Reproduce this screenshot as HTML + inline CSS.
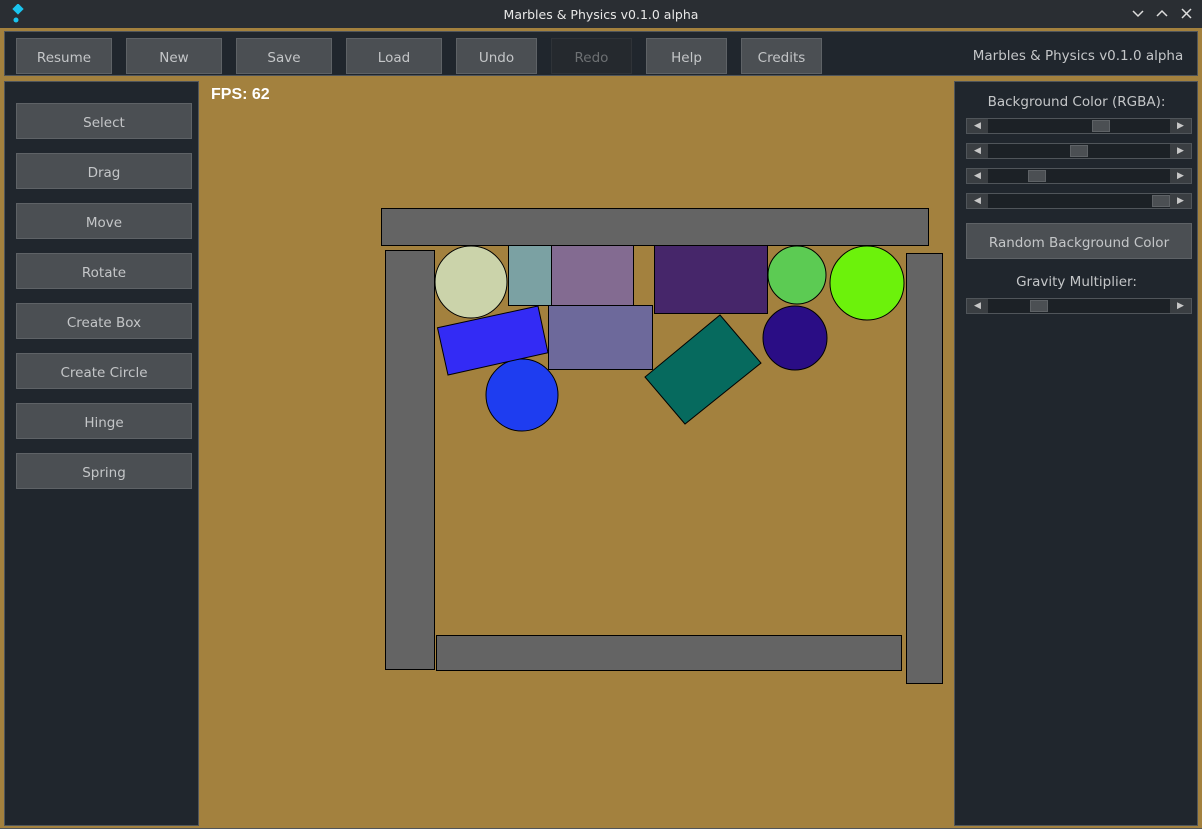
<!DOCTYPE html>
<html><head><meta charset="utf-8"><style>
*{margin:0;padding:0;box-sizing:border-box}
body{width:1202px;height:829px;background:#a3813e;font-family:"DejaVu Sans","Liberation Sans",sans-serif;position:relative;overflow:hidden;color:#c4c6c8}
.abs{position:absolute}
.title{left:0;top:0;width:1202px;height:29px;background:#2a2e33;border-bottom:1px solid #a3813e}
.title .t{position:absolute;left:0;right:0;top:7px;text-align:center;font-size:12.5px;color:#e8e8e8}
.panel{background:#20262d;border:1px solid #50555a}
.btn{position:absolute;background:#4b4f53;border:1px solid #5e6266;font-size:13.5px;color:#c4c6c8;text-align:center;display:flex;align-items:center;justify-content:center;padding-top:3px}
.dis{background:#25292e;border-color:#2f3338;color:#6d7073}
.sl{position:absolute;left:966px;width:226px;height:16px;background:#1c2126;border:1px solid #50555a}
.sl .a{position:absolute;top:0;width:21px;height:14px;background:#3a3e42;color:#c8c8c8;font-size:9px;line-height:14px;text-align:center}
.sl .th{position:absolute;top:1px;width:18px;height:12px;background:#4b4f53;border:1px solid #5e6266}
.lbl{position:absolute;left:955px;width:243px;text-align:center;font-size:13.5px;color:#c4c6c8}
</style></head><body>
<div class="abs title"><div class="t">Marbles &amp; Physics v0.1.0 alpha</div>
<svg class="abs" style="left:8px;top:4px" width="18" height="20" viewBox="0 0 18 20"><rect x="6" y="1" width="8" height="8" transform="rotate(45 10 5)" fill="#1ac4ee"/><circle cx="8" cy="16" r="2.5" fill="#1ac4ee"/></svg>
<svg class="abs" style="left:1130px;top:7px" width="65" height="14" viewBox="0 0 65 14" stroke="#ddd" stroke-width="1.5" fill="none"><path d="M3 4l5 5 5-5"/><path d="M27 9l5-5 5 5"/><path d="M52 2l9 9M61 2l-9 9"/></svg>
</div>
<div class="abs panel" style="left:4px;top:31px;width:1194px;height:45px"></div>
<div class="btn" style="left:16px;top:38px;width:96px;height:36px">Resume</div>
<div class="btn" style="left:126px;top:38px;width:96px;height:36px">New</div>
<div class="btn" style="left:236px;top:38px;width:96px;height:36px">Save</div>
<div class="btn" style="left:346px;top:38px;width:96px;height:36px">Load</div>
<div class="btn" style="left:456px;top:38px;width:81px;height:36px">Undo</div>
<div class="btn dis" style="left:551px;top:38px;width:81px;height:36px">Redo</div>
<div class="btn" style="left:646px;top:38px;width:81px;height:36px">Help</div>
<div class="btn" style="left:741px;top:38px;width:81px;height:36px">Credits</div>
<div class="abs" style="left:940px;width:276px;top:48px;text-align:center;font-size:13.5px">Marbles &amp; Physics v0.1.0 alpha</div>

<div class="abs panel" style="left:4px;top:81px;width:195px;height:745px"></div>
<div class="btn" style="left:16px;top:103px;width:176px;height:36px">Select</div>
<div class="btn" style="left:16px;top:153px;width:176px;height:36px">Drag</div>
<div class="btn" style="left:16px;top:203px;width:176px;height:36px">Move</div>
<div class="btn" style="left:16px;top:253px;width:176px;height:36px">Rotate</div>
<div class="btn" style="left:16px;top:303px;width:176px;height:36px">Create Box</div>
<div class="btn" style="left:16px;top:353px;width:176px;height:36px">Create Circle</div>
<div class="btn" style="left:16px;top:403px;width:176px;height:36px">Hinge</div>
<div class="btn" style="left:16px;top:453px;width:176px;height:36px">Spring</div>

<div class="abs panel" style="left:954px;top:81px;width:244px;height:745px"></div>
<div class="lbl" style="top:94px">Background Color (RGBA):</div>
<div class="sl" style="top:118px"><div class="a" style="left:0">◀</div><div class="a" style="right:0">▶</div><div class="th" style="left:125px"></div></div>
<div class="sl" style="top:143px"><div class="a" style="left:0">◀</div><div class="a" style="right:0">▶</div><div class="th" style="left:103px"></div></div>
<div class="sl" style="top:168px"><div class="a" style="left:0">◀</div><div class="a" style="right:0">▶</div><div class="th" style="left:61px"></div></div>
<div class="sl" style="top:193px"><div class="a" style="left:0">◀</div><div class="a" style="right:0">▶</div><div class="th" style="left:185px"></div></div>
<div class="btn" style="left:966px;top:223px;width:226px;height:36px">Random Background Color</div>
<div class="lbl" style="top:274px">Gravity Multiplier:</div>
<div class="sl" style="top:298px"><div class="a" style="left:0">◀</div><div class="a" style="right:0">▶</div><div class="th" style="left:63px"></div></div>

<div class="abs" style="left:211px;top:86px;font-family:'Liberation Sans',sans-serif;font-weight:bold;font-size:16px;color:#fff">FPS: 62</div>

<svg class="abs" style="left:0;top:0" width="1202" height="829" viewBox="0 0 1202 829" stroke="#000" stroke-width="1">
<rect x="381.5" y="208.5" width="547" height="37" fill="#646464"/>
<rect x="385.5" y="250.5" width="49" height="419" fill="#646464"/>
<rect x="906.5" y="253.5" width="36" height="430" fill="#646464"/>
<rect x="436.5" y="635.5" width="465" height="35" fill="#646464"/>
<circle cx="471" cy="282" r="36" fill="#cbd3aa"/>
<rect x="508.5" y="245.5" width="43" height="60" fill="#7ba1a3"/>
<rect x="551.5" y="245.5" width="82" height="60" fill="#836b91"/>
<rect x="654.5" y="245.5" width="113" height="68" fill="#46266a"/>
<rect x="548.5" y="305.5" width="104" height="64" fill="#6d699b"/>
<circle cx="797" cy="275" r="29" fill="#5ccb53"/>
<circle cx="867" cy="283" r="37" fill="#6cf20b"/>
<circle cx="795" cy="338" r="32" fill="#2a0d85"/>
<circle cx="522" cy="395" r="36" fill="#1e3df0"/>
<polygon points="437.5,327.7 538,306 548,352.7 448,375" fill="#332bf5"/>
<polygon points="720,315 761,363 685,424 645,377" fill="#066a5e"/>
</svg>
<div class="abs" style="left:0;top:828px;width:1202px;height:1px;background:#50555a"></div>
</body></html>
